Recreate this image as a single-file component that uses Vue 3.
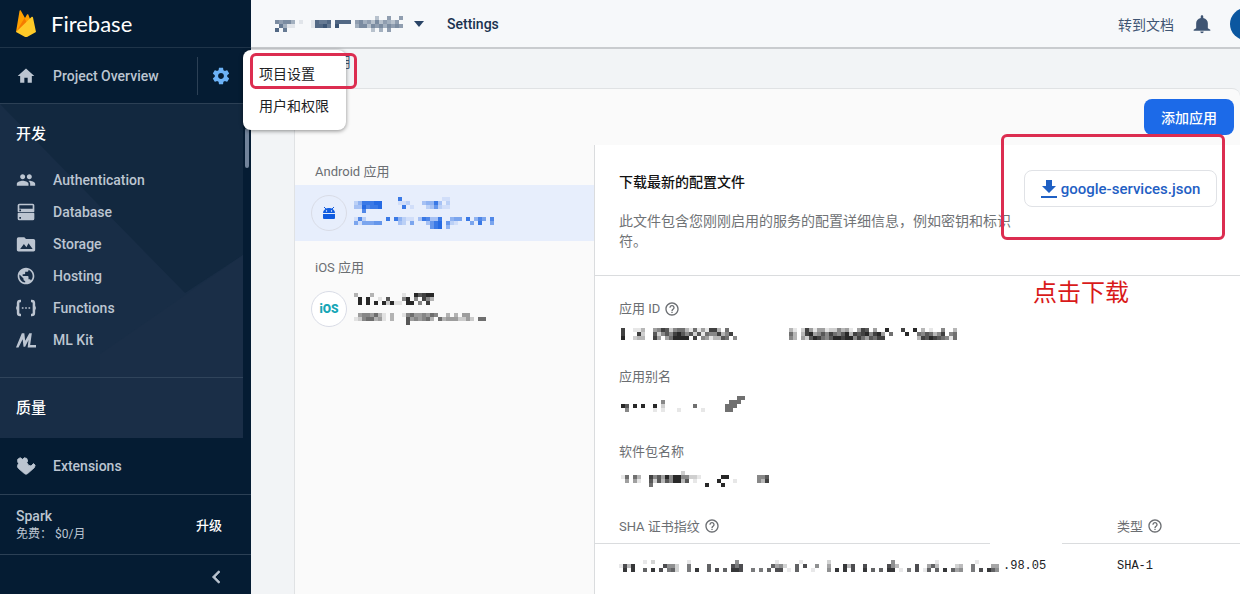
<script setup>
import { h } from 'vue';

const nav = [
	{ name: 'Authentication', icon: 'M16 11c1.66 0 2.99-1.34 2.99-3S17.66 5 16 5s-3 1.34-3 3 1.34 3 3 3zm-8 0c1.66 0 2.99-1.34 2.99-3S9.66 5 8 5 5 6.34 5 8s1.34 3 3 3zm0 2c-2.33 0-7 1.17-7 3.5V19h14v-2.5c0-2.33-4.67-3.5-7-3.5zm8 0c-.29 0-.62.02-.97.05 1.16.84 1.97 1.97 1.97 3.45V19h6v-2.5c0-2.33-4.67-3.5-7-3.5z' },
	{ name: 'Database', icon: 'M4 2h16a2 2 0 0 1 2 2v7a1 1 0 0 1-1 1H3a1 1 0 0 1-1-1V4a2 2 0 0 1 2-2zm0 2v4h16V4zM4 9v2h2V9zM3 13h18a1 1 0 0 1 1 1v6a2 2 0 0 1-2 2H4a2 2 0 0 1-2-2v-6a1 1 0 0 1 1-1zm1 5v2h2v-2z' },
	{ name: 'Storage', icon: 'M21 6h-9l-2-2H3a2 2 0 0 0-2 2v13c0 1.100.9 2 2 2h18c1.100 0 2-.9 2-2V8c0-1.100-.9-2-2-2zM5 18l4.500-6 3 4 2.500-5 5 7z' },
	{ name: 'Hosting', icon: 'M12 2C6.480 2 2 6.480 2 12s4.480 10 10 10 10-4.480 10-10S17.520 2 12 2zm-1 17.930c-3.950-.49-7-3.850-7-7.930 0-.62.08-1.210.21-1.790L9 15v1c0 1.100.9 2 2 2v1.930zm6.900-2.540c-.26-.81-1-1.390-1.900-1.390h-1v-3c0-.55-.45-1-1-1H8v-2h2c.55 0 1-.45 1-1V7h2c1.100 0 2-.9 2-2v-.41c2.930 1.190 5 4.060 5 7.410 0 2.080-.8 3.970-2.100 5.390z' },
	{ name: 'Functions', icon: 'M6 2H5a4 4 0 0 0-4 4v3l-1 3 1 3v3a4 4 0 0 0 4 4h1v-3H5a1 1 0 0 1-1-1V6a1 1 0 0 1 1-1h1zM18 2h1a4 4 0 0 1 4 4v3l1 3-1 3v3a4 4 0 0 1-4 4h-1v-3h1a1 1 0 0 0 1-1V6a1 1 0 0 0-1-1h-1zM7 11h2v2H7zM11 11h2v2h-2zM15 11h2v2h-2z' },
	{ name: 'ML Kit', icon: 'M0 21 7 4h3l1 9 5-9h3l-2 14h7v3H14l1-9-4 8H9L8 11 3 21z' },
];

// One character per 4px block: 1-9 is the strength, a dot is empty
const masks = {
	project: [
		'.........................3..5..5',
		'65664.1..18778.8888.56453635435.',
		'.7411....18897.9....466365646565',
		'8.7.....................3.4.5...',
	],
	androidName: [
		'...........8..........11',
		'2488899....112...34483.2',
		'3397889.....8.1...236211',
		'..7.....................',
	],
	androidPackage: [
		'172.....8.84211.387338..455.8.475.7',
		'5155566....32.5...3689.621...5.8..5',
		'...................689.4...........',
	],
	iosName: [
		'3...3.......1..97899',
		'.9.9..1.7...59.5.853',
		'.9.9.9.92911.99.5.8.',
		'....................',
	],
	iosPackage: [
		'.4554631.3..156445465..3.3.44....',
		'12566341.3...7454563.634442242.66',
		'.............7...................',
	],
	appId: [
		'8..113..45872566316141883.6...............31.2841441225341.487.4..9...8..9.3.1..5..3',
		'8...82..72575897572716558358..............63.389457586579387895894.6...9..6576358.56',
		'9..233..84.469999.8.5413376.5.............53.427986579989958647688........3879876516',
	],
	alias: [
		'.............................66',
		'..........5................666.',
		'97.9.9..9.2.......6.......666..',
		'.5......1.1...1.....1.....66...',
	],
	packageName: [
		'...............2.....................',
		'16.63..8574959955221.....99.......557',
		'.4.41..7273759937.1.....9...1.....538',
		'.......6.............9...9...........',
	],
	fingerprint: [
		'......1.2........1...........5.........1.....1......2...............5..........1.........1.....',
		'1839.......8552..6....7.....868.......7452..7.8..5..4...938..8.....853....8..473....23..6....44',
		'.9.9..7.9.8.672..6.9..7.8.7.998..6.6.7.88.1.7...1...5.9.9.8..9.7.7.99.1.6.8.17.7.9.745..6.8.975',
	],
};

const Mosaic = ({ rows }) => {
	const width = Math.max(...rows.map((row) => row.length)) * 4;
	const height = rows.length * 4;
	const blocks = rows.flatMap((row, y) =>
		[...row].flatMap((cell, x) =>
			cell === '.' ? [] : [h('rect', { x: x * 4, y: y * 4, width: 4, height: 4, 'fill-opacity': cell / 10 })]
		)
	);

	return h('svg', { width, height, fill: 'currentColor', 'shape-rendering': 'crispEdges', 'aria-hidden': 'true' }, blocks);
};
Mosaic.props = ['rows'];

const HelpIcon = () =>
	h('svg', { class: 'help', viewBox: '0 0 24 24', width: 16, height: 16, fill: 'currentColor' }, [
		h('path', { d: 'M11 18h2v-2h-2v2zm1-16C6.480 2 2 6.480 2 12s4.480 10 10 10 10-4.480 10-10S17.520 2 12 2zm0 18c-4.410 0-8-3.590-8-8s3.590-8 8-8 8 3.590 8 8-3.590 8-8 8zm0-14c-2.210 0-4 1.790-4 4h2c0-1.100.9-2 2-2s2 .9 2 2c0 2-3 1.750-3 5h2c0-2.250 3-2.500 3-5 0-2.210-1.790-4-4-4z' }),
	]);
</script>

<template>
	<div class="page">
		<aside>
			<a class="brand" href="#">
				<svg viewBox="0 0 20 27" width="20" height="27">
					<path d="M0 22 3.500 1c.1-.8 1-1 1.400-.3L9 8l2-3.400c.3-.6 1-.6 1.300 0L19 22z" fill="#ffa000" />
					<path d="M11 13 8.500 8 0 22z" fill="#f57c00" />
					<path d="m0 22 15.500-15c.6-.5 1.400-.3 1.500.5L20 22l-8.500 4.700c-.9.5-2 .5-2.800 0z" fill="#ffca28" />
				</svg>
				<span>Firebase</span>
			</a>

			<div class="overview">
				<a class="item" href="#">
					<svg viewBox="0 0 24 24"><path d="M10 20v-6h4v6h5v-8h3L12 3 2 12h3v8z" /></svg>
					<span>Project Overview</span>
				</a>
				<button class="gear" aria-label="设置">
					<svg viewBox="0 0 24 24"><path d="M19.430 12.980c.04-.32.07-.64.07-.98s-.03-.66-.07-.98l2.110-1.650c.19-.15.24-.42.12-.64l-2-3.460c-.12-.22-.39-.3-.61-.22l-2.490 1c-.52-.4-1.080-.73-1.690-.98l-.38-2.650C14.460 2.180 14.250 2 14 2h-4c-.25 0-.46.18-.49.42l-.38 2.650c-.61.25-1.170.59-1.690.98l-2.490-1c-.23-.09-.49 0-.61.22l-2 3.460c-.13.22-.07.49.12.64l2.110 1.650c-.04.32-.07.65-.07.98s.03.66.07.98l-2.110 1.650c-.19.15-.24.42-.12.64l2 3.460c.12.22.39.3.61.22l2.490-1c.52.4 1.080.73 1.690.98l.38 2.650c.03.24.24.42.49.42h4c.25 0 .46-.18.49-.42l.38-2.650c.61-.25 1.170-.59 1.690-.98l2.490 1c.23.09.49 0 .61-.22l2-3.460c.12-.22.07-.49-.12-.64l-2.110-1.650zM12 15.500c-1.930 0-3.500-1.570-3.500-3.500s1.570-3.500 3.500-3.500 3.500 1.570 3.500 3.500-1.570 3.500-3.500 3.500z" /></svg>
				</button>
			</div>

			<div class="scroller">
				<nav>
					<svg class="facets" viewBox="0 0 243 334" preserveAspectRatio="none">
						<path d="M0 0h243v151l-58 38z" fill="#12283f" />
						<path d="M243 151 100 250v84h143z" fill="#1a2e47" />
					</svg>
					<h2>开发</h2>
					<a v-for="entry in nav" :key="entry.name" class="item" href="#">
						<svg viewBox="0 0 24 24"><path :d="entry.icon" fill-rule="evenodd" /></svg>
						<span>{{ entry.name }}</span>
					</a>
					<h2 class="quality">质量</h2>
				</nav>
				<div class="track"><div class="thumb"></div></div>
			</div>

			<a class="item extensions" href="#">
				<svg viewBox="0 0 24 24"><path d="M2 4 5 2l3 2 2-2 3 1 1 3-1 2 2 3 3 1 3-3 2 2-1 3-8 7q-2 2-4 0l-7-6q-2-2-1-4l1-2-1-2z" stroke="currentColor" stroke-linejoin="round" /></svg>
				<span>Extensions</span>
			</a>

			<div class="plan">
				<div>
					<strong>Spark</strong>
					<small>免费： $0/月</small>
				</div>
				<button>升级</button>
			</div>

			<button class="collapse" aria-label="收起">
				<svg viewBox="0 0 24 24"><path d="M15.410 6 14 4.500 6.500 12l7.500 7.500 1.410-1.500L9.500 12z" stroke="currentColor" /></svg>
			</button>
		</aside>

		<div class="menu">
			<a href="#">项目设置</a>
			<a href="#">用户和权限</a>
			<div class="mark"></div>
		</div>

		<main>
			<header>
				<button class="project" aria-label="项目">
					<Mosaic :rows="masks.project" />
					<svg class="caret" viewBox="0 0 10 6" width="10" height="6"><path d="M0 0h10L5 6z" /></svg>
				</button>
				<h1>Settings</h1>
				<a class="docs" href="#">转到文档</a>
				<svg class="bell" viewBox="0 0 24 24"><path d="M12 23c1.100 0 2-.9 2-2h-4c0 1.100.9 2 2 2zm7-6v-6c0-3.070-2-5.640-5.500-6.320V3c0-.83-.67-1.500-1.500-1.500s-1.500.67-1.500 1.500v1.680C7 5.360 5 7.920 5 11v6l-3 2v1h20v-1z" /></svg>
				<div class="avatar"></div>
			</header>

			<h3>您的应用</h3>

			<div class="card">
				<div class="toolbar"><button class="add">添加应用</button></div>

				<div class="apps">
					<h4>Android 应用</h4>
					<a class="app selected" href="#">
						<span class="logo">
							<svg viewBox="0 0 14 14" width="14" height="14">
								<path d="M1 7a6 5 0 0 1 12 0zM1 8h12v4a1 1 0 0 1-1 1H2a1 1 0 0 1-1-1z" />
								<path d="m2 1 2 2M12 1l-2 2" stroke="currentColor" />
								<circle cx="4.500" cy="5" r=".7" fill="#fff" /><circle cx="9.500" cy="5" r=".7" fill="#fff" />
							</svg>
						</span>
						<span class="masked"><Mosaic :rows="masks.androidName" /><Mosaic :rows="masks.androidPackage" /></span>
					</a>
					<h4>iOS 应用</h4>
					<a class="app" href="#">
						<span class="logo ios">iOS</span>
						<span class="masked"><Mosaic :rows="masks.iosName" /><Mosaic :rows="masks.iosPackage" /></span>
					</a>
				</div>

				<section>
					<div class="config">
						<div class="text">
							<h5>下载最新的配置文件</h5>
							<p>此文件包含您刚刚启用的服务的配置详细信息，例如密钥和标识符。</p>
						</div>
						<button class="download">
							<svg viewBox="0 0 16 18" width="16" height="18"><path d="M5 0h6v6h4l-7 7-7-7h4zM0 16h16v2H0z" /></svg>
							google-services.json
						</button>
						<div class="mark"></div>
						<div class="note">点击下载</div>
					</div>

					<dl>
						<dt>应用 ID <HelpIcon /></dt>
						<dd><Mosaic :rows="masks.appId" /></dd>
						<dt>应用别名</dt>
						<dd><Mosaic :rows="masks.alias" /></dd>
						<dt>软件包名称</dt>
						<dd><Mosaic :rows="masks.packageName" /></dd>
					</dl>

					<table>
						<thead>
							<tr>
								<th><span>SHA 证书指纹 <HelpIcon /></span></th>
								<th><span>类型 <HelpIcon /></span></th>
							</tr>
						</thead>
						<tbody>
							<tr>
								<td><span class="sha"><Mosaic :rows="masks.fingerprint" />.98.05</span></td>
								<td>SHA-1</td>
							</tr>
						</tbody>
					</table>
				</section>
			</div>
		</main>
	</div>
</template>

<style>
body {
	background: #f2f4f6;
}
</style>

<style scoped>
.page {
	position: relative;
	display: flex;
	height: 100vh;
	min-height: 560px;
	overflow: hidden;
	font-family: Roboto, "Noto Sans CJK SC", sans-serif;
	font-size: 14px;
	color: #202124;
}

.page * {
	box-sizing: border-box;
}

h1, h2, h3, h4, h5, p, dl, dd {
	margin: 0;
	font-weight: 400;
}

a {
	color: inherit;
	text-decoration: none;
}

button {
	padding: 0;
	border: 0;
	background: none;
	font: inherit;
	color: inherit;
	cursor: pointer;
}

svg {
	display: block;
	flex: none;
	fill: currentColor;
}

/* Sidebar */
aside {
	flex: none;
	display: flex;
	flex-direction: column;
	width: 251px;
	background: #051c33;
	color: #bcc5d1;
}

.brand {
	display: flex;
	align-items: center;
	gap: 15px;
	height: 48px;
	padding: 0 16px;
	border-bottom: 1px solid #1f3449;
	color: #fff;
	font-family: Lato, sans-serif;
	font-size: 22px;
}

.overview {
	display: flex;
	align-items: center;
	height: 56px;
	border-bottom: 1px solid #2c4055;
}

.item {
	position: relative;
	display: flex;
	align-items: center;
	gap: 17px;
	height: 32px;
	padding-left: 16px;
	font-weight: 500;
}

.item svg,
.gear svg,
.collapse svg {
	width: 20px;
	height: 20px;
}

.overview .item {
	flex: 1;
}

.gear {
	display: grid;
	place-items: center;
	width: 54px;
	height: 38px;
	padding-right: 8px;
	border-left: 1px solid #2c4055;
	color: #6cb2f7;
}

.scroller {
	flex: 1;
	display: flex;
	min-height: 0;
	overflow: hidden;
}

nav {
	position: relative;
	flex: 1;
	background: #182d46;
}

.facets {
	position: absolute;
	inset: 0;
	width: 100%;
	height: 100%;
}

h2 {
	position: relative;
	height: 60px;
	padding-left: 16px;
	font-size: 15px;
	font-weight: 500;
	line-height: 60px;
	color: #fff;
}

.quality {
	margin-top: 21px;
	border-top: 1px solid #30445b;
}

.track {
	width: 8px;
	padding: 24px 2px;
}

.thumb {
	height: 40px;
	border-radius: 2px;
	background: #71839a;
}

.extensions {
	height: 56px;
}

.plan {
	display: flex;
	align-items: center;
	justify-content: space-between;
	height: 61px;
	padding: 0 29px 0 16px;
	border: solid #2c4055;
	border-width: 1px 0;
}

.plan strong,
.plan small {
	display: block;
	font-weight: 500;
	line-height: 18px;
}

.plan small {
	font-size: 12px;
	font-weight: 400;
}

.plan button {
	color: #fff;
	font-size: 13px;
	font-weight: 500;
}

.collapse {
	display: flex;
	justify-content: flex-end;
	align-items: center;
	height: 39px;
	padding: 5px 24px 0;
}

/* Project menu, opened from the gear */
.menu {
	position: absolute;
	z-index: 2;
	top: 50px;
	left: 243px;
	width: 103px;
	padding: 8px 0;
	border-radius: 8px;
	background: #fff;
	box-shadow: 0 1px 4px rgba(0, 0, 0, 0.45);
}

.menu a {
	display: block;
	padding-left: 16px;
	line-height: 32px;
}

.mark {
	position: absolute;
	border: 3px solid #dc2d50;
	border-radius: 6px;
	pointer-events: none;
}

.menu .mark {
	top: 3px;
	left: 7px;
	width: 107px;
	height: 36px;
}

/* Content */
main {
	flex: 1;
	min-width: 0;
	display: flex;
	flex-direction: column;
}

header {
	flex: none;
	display: flex;
	align-items: center;
	height: 49px;
	padding-left: 24px;
	overflow: hidden;
	border-bottom: 2px solid #c9cccf;
	background: #f6f8fa;
	color: #3f5573;
}

.project {
	display: flex;
	align-items: center;
	gap: 11px;
	color: #294466;
}

h1 {
	margin-left: 23px;
	font-size: 14px;
	font-weight: 500;
	color: #1b3350;
}

.docs {
	margin-left: auto;
}

.bell {
	width: 20px;
	height: 22px;
	margin: 0 18px;
}

.avatar {
	flex: none;
	width: 32px;
	height: 32px;
	margin-right: -22px;
	border-radius: 50%;
	background: #0b57a0;
}

h3 {
	padding-left: 44px;
	font-size: 14px;
	line-height: 26px;
	color: #3f5573;
}

.card {
	flex: 1;
	display: grid;
	grid-template: 56px 1fr / 299px 1fr;
	margin: 13px 0 0 43px;
	border: solid #e0e2e4;
	border-width: 1px 0 0 1px;
	border-radius: 0 8px 0 0;
	background: #fafafa;
}

.toolbar {
	grid-column: 1 / 3;
	display: flex;
	justify-content: flex-end;
	padding: 10px 6px;
}

.add {
	width: 90px;
	height: 36px;
	border-radius: 8px;
	background: #1c6ae8;
	color: #fff;
	font-weight: 500;
}

h4 {
	height: 40px;
	padding: 14px 0 0 20px;
	font-size: 13px;
	line-height: 26px;
	color: #6b6e72;
}

.app {
	display: flex;
	align-items: center;
	gap: 7px;
	height: 56px;
	padding-left: 16px;
	color: #111;
}

.selected {
	background: #e7eefc;
	color: #0f5be0;
}

.logo {
	display: grid;
	place-items: center;
	width: 36px;
	height: 36px;
	border: 1px solid #d9dce6;
	border-radius: 50%;
}

.ios {
	background: #fff;
	color: #16a6b6;
	font-size: 12px;
	font-weight: 900;
}

.masked {
	display: flex;
	flex-direction: column;
	gap: 4px;
}

section {
	border-left: 1px solid #dadcde;
	background: #fff;
}

.config {
	position: relative;
	display: flex;
	justify-content: space-between;
	align-items: flex-start;
	height: 131px;
	padding: 25px 23px 0 24px;
	border-bottom: 1px solid #dadcde;
}

.text {
	width: 400px;
}

h5 {
	font-size: 14px;
	font-weight: 500;
	line-height: 24px;
	color: #111;
}

p {
	margin-top: 17px;
	line-height: 20px;
	color: #707376;
}

.download {
	display: flex;
	align-items: center;
	justify-content: center;
	gap: 4px;
	flex: none;
	width: 193px;
	height: 37px;
	border: 1px solid #e0e2e6;
	border-radius: 8px;
	color: #1f60c4;
	font-size: 15px;
	font-weight: 500;
}

.config .mark {
	top: -11px;
	right: 15px;
	width: 224px;
	height: 106px;
}

.note {
	position: absolute;
	top: 130px;
	right: 111px;
	font-size: 24px;
	line-height: 36px;
	color: #d91a1a;
}

dl {
	padding: 20px 24px 0;
}

dt {
	display: flex;
	align-items: center;
	gap: 4px;
	font-size: 13px;
	line-height: 26px;
	color: #6b6e72;
}

dd {
	height: 49px;
	padding: 6px 0 0 2px;
	color: #111;
}

dd:first-of-type {
	height: 42px;
}

table {
	width: 100%;
	border-spacing: 0;
	table-layout: fixed;
}

th {
	position: relative;
	height: 30px;
	padding: 0 0 6px 24px;
	border-bottom: 1px solid #dadcde;
	font-size: 13px;
	font-weight: 400;
	text-align: left;
	color: #6b6e72;
}

th:last-child {
	width: 147px;
}

/* Leaves a gap in the rule above the masked value */
th:first-child::after {
	content: '';
	position: absolute;
	right: 31px;
	bottom: -1px;
	width: 72px;
	height: 2px;
	background: #fff;
}

th span {
	display: flex;
	align-items: center;
	gap: 4px;
}

td {
	height: 43px;
	padding: 0 0 0 24px;
	font-family: "Liberation Mono", monospace;
	font-size: 12px;
}

.sha {
	display: flex;
	align-items: center;
	gap: 4px;
}
</style>
